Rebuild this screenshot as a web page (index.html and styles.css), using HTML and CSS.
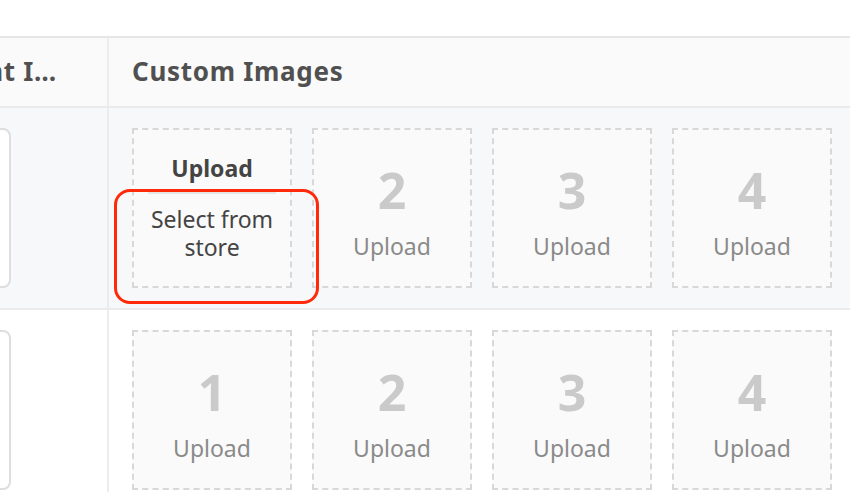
FILE: index.html
```html
<!DOCTYPE html>
<html>
<head>
<meta charset="utf-8">
<link rel="stylesheet" href="styles.css">
</head>
<body>
<div class="table">
  <div class="row head">
    <div class="cell left"><span class="head-text">Variant I…</span></div>
    <div class="cell main"><span class="head-text">Custom Images</span></div>
  </div>
  <div class="row body alt">
    <div class="cell left"><div class="variant-box"></div></div>
    <div class="cell main tiles">
      <div class="tile tile-menu">
        <div class="menu">
          <div class="menu-item strong">Upload</div>
          <div class="menu-item">Select from store</div>
        </div>
        <div class="highlight"></div>
      </div>
      <div class="tile"><span class="num">2</span><span class="label">Upload</span></div>
      <div class="tile"><span class="num">3</span><span class="label">Upload</span></div>
      <div class="tile"><span class="num">4</span><span class="label">Upload</span></div>
    </div>
  </div>
  <div class="row body">
    <div class="cell left"><div class="variant-box"></div></div>
    <div class="cell main tiles">
      <div class="tile"><span class="num">1</span><span class="label">Upload</span></div>
      <div class="tile"><span class="num">2</span><span class="label">Upload</span></div>
      <div class="tile"><span class="num">3</span><span class="label">Upload</span></div>
      <div class="tile"><span class="num">4</span><span class="label">Upload</span></div>
    </div>
  </div>
</div>
</body>
</html>
```

FILE: styles.css
```css
html, body {
  margin: 0;
  padding: 0;
  background: #ffffff;
  overflow: hidden;
}
body {
  font-family: "Noto Sans", "Open Sans", sans-serif;
  color: #444;
}
.table {
  margin-top: 36px;
  margin-left: -173px;
  width: 1100px;
  border-top: 2px solid #e6e6e6;
}
.row {
  display: flex;
  border-bottom: 2px solid #ebebeb;
}
.row.head {
  background: #fafafa;
  height: 68px;
}
.row.alt {
  background: #f7f8fa;
}
.cell.left {
  flex: none;
  width: 280px;
  border-right: 2px solid #ececec;
}
.row.head .cell {
  display: flex;
  align-items: center;
}
.row.head .cell.left {
  justify-content: flex-end;
  padding-right: 50px;
  box-sizing: border-box;
  width: 282px;
}
.head-text {
  font-size: 26px;
  font-weight: 700;
  letter-spacing: 0.7px;
  color: #505050;
  white-space: nowrap;
  margin-top: -2px;
}
.row.head .cell.main {
  padding-left: 23px;
}
.row.body .cell.left {
  padding: 20px 24px;
  box-sizing: border-box;
  width: 282px;
}
.variant-box {
  width: 160px;
  height: 160px;
  box-sizing: border-box;
  border: 2px solid #dedede;
  border-radius: 8px;
  background: #fff;
}
.tiles {
  display: flex;
  gap: 20px;
  padding: 20px 0 20px 23px;
}
.tile {
  position: relative;
  flex: none;
  width: 160px;
  height: 160px;
  box-sizing: border-box;
  border: 2px dashed #d8d8d8;
  background: #fafafa;
  display: flex;
  flex-direction: column;
  align-items: center;
  padding-top: 33px;
}
.num {
  font-size: 50px;
  font-weight: 700;
  line-height: 54px;
  color: #cacaca;
}
.label {
  margin-top: 14px;
  font-size: 23px;
  line-height: 30px;
  color: #8a8a8a;
}
.tile-menu {
  padding-top: 24px;
}
.menu {
  width: 128px;
  display: flex;
  flex-direction: column;
}
.menu-item {
  font-size: 23px;
  line-height: 28px;
  text-align: center;
  color: #444;
}
.menu-item.strong {
  font-weight: 700;
  padding-bottom: 10px;
  border-bottom: 2px solid #e6e6e6;
}
.menu-item + .menu-item {
  padding-top: 11px;
  font-weight: 400;
}
.highlight {
  position: absolute;
  z-index: 5;
  left: -20px;
  top: 59px;
  width: 205px;
  height: 115px;
  box-sizing: border-box;
  border: 3.5px solid #ff2a0a;
  border-radius: 16px;
}
```
